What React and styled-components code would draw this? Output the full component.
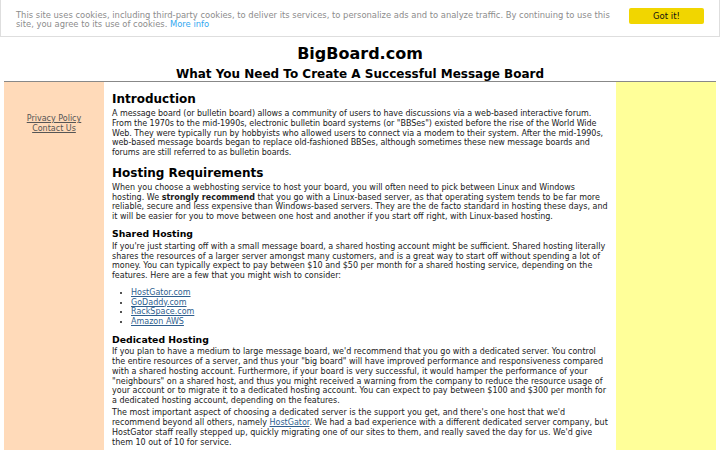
import React from "react";
import styled, { createGlobalStyle } from "styled-components";

const Global = createGlobalStyle`
  html, body { margin: 0; padding: 0; background: #fff; }
  body { font-family: "DejaVu Sans", sans-serif; color: #000; }
`;

const CookieBar = styled.div`
  display: flex;
  align-items: flex-start;
  gap: 10px;
  height: 37px;
  box-sizing: border-box;
  padding: 8px 15px 0;
  border: 1px solid #dedede;
  border-top: none;
  background: #fff;
  font-size: 8.4px;
  line-height: 9.4px;
  color: #8c8c8c;
`;

const CookieText = styled.div`
  flex: 1;
  padding-top: 3px;
`;

const MoreInfo = styled.a`
  color: #31a8f0;
  text-decoration: none;
`;

const GotIt = styled.button`
  flex: none;
  width: 75px;
  height: 16px;
  border: none;
  border-radius: 2px;
  background: #f1d600;
  color: #111;
  font-family: "DejaVu Sans", sans-serif;
  font-size: 8.5px;
  padding: 0;
`;

const Header = styled.header`
  text-align: center;
  padding-top: 7px;
`;

const Title = styled.h1`
  margin: 0;
  font-size: 16px;
  line-height: 19px;
  font-weight: bold;
`;

const Subtitle = styled.h2`
  margin: 4px 0 0;
  font-size: 12px;
  line-height: 14px;
  font-weight: bold;
`;

const Layout = styled.div`
  margin: 0 4px;
  border-top: 1px solid #888;
  display: grid;
  grid-template-columns: 100px 1fr 100px;
  min-height: 400px;
`;

const LeftCol = styled.nav`
  background: #ffdab9;
  text-align: center;
  padding-top: 32px;
  font-size: 8px;
  line-height: 9.75px;
`;

const NavLink = styled.a`
  display: block;
  color: #555;
  text-decoration: underline;
`;

const Main = styled.main`
  padding: 10px 8px 0;
  font-size: 8px;
  line-height: 9.75px;
  color: #1a1a1a;
`;

const RightCol = styled.aside`
  background: #ffff99;
`;

const H2 = styled.h2`
  margin: 8px 0 3px;
  font-size: 12px;
  line-height: 14px;
  font-weight: bold;
  color: #000;
  &:first-child { margin-top: 0; }
`;

const H3 = styled.h3`
  margin: 6.5px 0 2.5px;
  font-size: 9.3px;
  line-height: 11px;
  font-weight: bold;
  color: #000;
`;

const P = styled.p`
  margin: 0 0 2.5px;
  letter-spacing: ${(p) => (p.$tight ? "-0.05px" : "normal")};
`;

const List = styled.ul`
  margin: 7px 0 7px;
  padding-left: 19px;
`;

const Link = styled.a`
  color: #2f5f8f;
  text-decoration: underline;
`;

export default function App() {
  return (
    <>
      <Global />
      <CookieBar>
        <CookieText>
          This site uses cookies, including third-party cookies, to deliver its services, to personalize ads and to analyze traffic. By continuing to use this site, you agree to its use of cookies. <MoreInfo href="#">More info</MoreInfo>
        </CookieText>
        <GotIt>Got it!</GotIt>
      </CookieBar>
      <Header>
        <Title>BigBoard.com</Title>
        <Subtitle>What You Need To Create A Successful Message Board</Subtitle>
      </Header>
      <Layout>
        <LeftCol>
          <NavLink href="#">Privacy Policy</NavLink>
          <NavLink href="#">Contact Us</NavLink>
        </LeftCol>
        <Main>
          <H2>Introduction</H2>
          <P $tight>
            A message board (or bulletin board) allows a community of users to have discussions via a web-based interactive forum. From the 1970s to the mid-1990s, electronic bulletin board systems (or "BBSes") existed before the rise of the World Wide Web. They were typically run by hobbyists who allowed users to connect via a modem to their system. After the mid-1990s, web-based message boards began to replace old-fashioned BBSes, although sometimes these new message boards and forums are still referred to as bulletin boards.
          </P>
          <H2>Hosting Requirements</H2>
          <P>
            When you choose a webhosting service to host your board, you will often need to pick between Linux and Windows hosting. We <strong>strongly recommend</strong> that you go with a Linux-based server, as that operating system tends to be far more reliable, secure and less expensive than Windows-based servers. They are the de facto standard in hosting these days, and it will be easier for you to move between one host and another if you start off right, with Linux-based hosting.
          </P>
          <H3>Shared Hosting</H3>
          <P>
            If you're just starting off with a small message board, a shared hosting account might be sufficient. Shared hosting literally shares the resources of a larger server amongst many customers, and is a great way to start off without spending a lot of money. You can typically expect to pay between $10 and $50 per month for a shared hosting service, depending on the features. Here are a few that you might wish to consider:
          </P>
          <List>
            <li><Link href="#">HostGator.com</Link></li>
            <li><Link href="#">GoDaddy.com</Link></li>
            <li><Link href="#">RackSpace.com</Link></li>
            <li><Link href="#">Amazon AWS</Link></li>
          </List>
          <H3>Dedicated Hosting</H3>
          <P>
            If you plan to have a medium to large message board, we'd recommend that you go with a dedicated server. You control the entire resources of a server, and thus your "big board" will have improved performance and responsiveness compared with a shared hosting account. Furthermore, if your board is very successful, it would hamper the performance of your "neighbours" on a shared host, and thus you might received a warning from the company to reduce the resource usage of your account or to migrate it to a dedicated hosting account. You can expect to pay between $100 and $300 per month for a dedicated hosting account, depending on the features.
          </P>
          <P>
            The most important aspect of choosing a dedicated server is the support you get, and there's one host that we'd recommend beyond all others, namely <Link href="#">HostGator</Link>. We had a bad experience with a different dedicated server company, but HostGator staff really stepped up, quickly migrating one of our sites to them, and really saved the day for us. We'd give them 10 out of 10 for service.
          </P>
        </Main>
        <RightCol />
      </Layout>
    </>
  );
}
